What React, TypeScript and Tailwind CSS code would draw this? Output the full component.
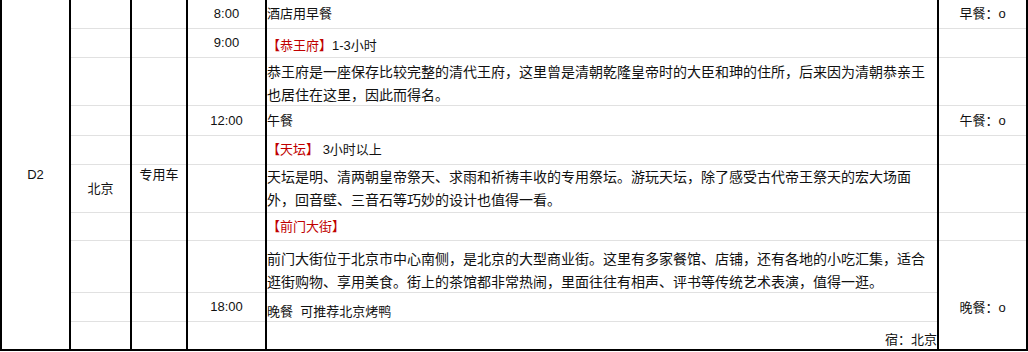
type Row = {
  h: string;
  time?: string;
  content: React.ReactNode;
  cellClass?: string;
  meal?: string;
};

const Red = ({ children }: { children: React.ReactNode }) => (
  <span className="text-[#c00000]">{children}</span>
);

const rows: Row[] = [
  { h: 'h-[29px]', time: '8:00', content: '酒店用早餐', meal: '早餐：o' },
  {
    h: 'h-[29px]',
    time: '9:00',
    content: (
      <>
        <Red>【恭王府】</Red>1-3小时
      </>
    ),
    cellClass: 'pt-[5px]'
  },
  {
    h: 'h-[48px]',
    content: (
      <p className="text-[14px] leading-[23px] whitespace-nowrap">
        恭王府是一座保存比较完整的清代王府，这里曾是清朝乾隆皇帝时的大臣和珅的住所，后来因为清朝恭亲王
        <br />
        也居住在这里，因此而得名。
      </p>
    ),
    cellClass: 'pt-[4px]'
  },
  { h: 'h-[30px]', time: '12:00', content: '午餐', meal: '午餐：o' },
  {
    h: 'h-[29px]',
    content: (
      <>
        <Red>【天坛】</Red> 3小时以上
      </>
    )
  },
  {
    h: 'h-[48px]',
    content: (
      <p className="text-[14px] leading-[23px] whitespace-nowrap">
        天坛是明、清两朝皇帝祭天、求雨和祈祷丰收的专用祭坛。游玩天坛，除了感受古代帝王祭天的宏大场面
        <br />
        外，回音壁、三音石等巧妙的设计也值得一看。
      </p>
    )
  },
  { h: 'h-[28px]', content: <Red>【前门大街】</Red> },
  {
    h: 'h-[52px]',
    content: (
      <p className="text-[14px] leading-[23px] whitespace-nowrap">
        前门大街位于北京市中心南侧，是北京的大型商业街。这里有多家餐馆、店铺，还有各地的小吃汇集，适合
        <br />
        逛街购物、享用美食。街上的茶馆都非常热闹，里面往往有相声、评书等传统艺术表演，值得一逛。
      </p>
    ),
    cellClass: 'pt-[8px]'
  },
  { h: 'h-[29px]', time: '18:00', content: '晚餐  可推荐北京烤鸭', cellClass: 'pt-[9px]' },
  { h: 'h-[27px]', content: '宿：北京', cellClass: 'pt-[8px] justify-end' }
];

const line = 'border-b border-[#e1e1e1] last:border-b-0';

// empty grid cells, one per row, so the light lines show under merged labels
const GridLines = () => (
  <div className="col-start-1 row-start-1 flex flex-col">
    {rows.map((r, i) => (
      <div key={i} className={`${r.h} ${line}`} />
    ))}
  </div>
);

export default function App() {
  return (
    <div className="flex w-[1028px] h-[351px] gap-[2px] bg-black px-[2px] pb-[2px] text-[13px] text-[#111] font-['Liberation_Sans','Noto_Sans_CJK_SC',sans-serif]">
      {/* Day */}
      <div className="w-[67px] shrink-0 bg-white flex items-center justify-center">D2</div>

      {/* City */}
      <div className="w-[59px] shrink-0 bg-white grid">
        <GridLines />
        <div className="col-start-1 row-start-1 flex items-center justify-center pt-[29px]">北京</div>
      </div>

      {/* Transport */}
      <div className="w-[54px] shrink-0 bg-white grid">
        <GridLines />
        <div className="col-start-1 row-start-1 flex items-center justify-center">专用车</div>
      </div>

      {/* Time */}
      <div className="w-[77px] shrink-0 bg-white flex flex-col">
        {rows.map((r, i) => (
          <div key={i} className={`${r.h} ${line} flex items-center justify-center`}>
            {r.time}
          </div>
        ))}
      </div>

      {/* Schedule */}
      <div className="w-[670px] shrink-0 bg-white flex flex-col">
        {rows.map((r, i) => (
          <div key={i} className={`${r.h} ${line} flex items-center whitespace-pre ${r.cellClass ?? ''}`}>
            {r.content}
          </div>
        ))}
      </div>

      {/* Meals */}
      <div className="w-[87px] shrink-0 bg-white flex flex-col">
        {rows.slice(0, 7).map((r, i) => (
          <div key={i} className={`${r.h} border-b border-[#e1e1e1] flex items-center justify-center`}>
            {r.meal}
          </div>
        ))}
        <div className="h-[108px] flex items-center justify-center pt-[26px]">晚餐：o</div>
      </div>
    </div>
  );
}
